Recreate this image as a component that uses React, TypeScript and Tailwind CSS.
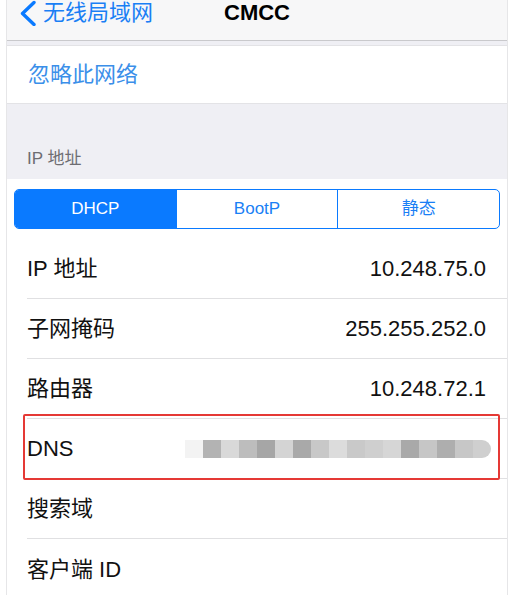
const FONT = '"Liberation Sans", "Noto Sans CJK SC", sans-serif';

const rows = [
  { label: 'IP 地址', value: '10.248.75.0' },
  { label: '子网掩码', value: '255.255.252.0' },
  { label: '路由器', value: '10.248.72.1' },
];

const blurShades = [
  '#b3b3b3', '#d9d9d9', '#bdbdbd', '#a6a6a6', '#d4d4d4', '#a9a9a9', '#c8c8c8', '#dcdcdc',
  '#c9c9c9', '#cfcfcf', '#d6d6d6', '#a9a9a9', '#c6c6c6', '#aeaeae', '#c7c7c7', '#cfcfcf',
];

function Row({ label, value, last }: { label: string; value?: string; last?: boolean }) {
  return (
    <div className="pl-[20px]">
      <div
        className={`h-[60px] flex items-center justify-between pr-[21px] ${
          last ? '' : 'border-b border-[#e0e0e2]'
        }`}
      >
        <span className="text-[22px] text-[#111]">{label}</span>
        {value && <span className="text-[22px] text-[#111]">{value}</span>}
      </div>
    </div>
  );
}

function BlurredValue() {
  return (
    <div className="relative h-[18px] flex items-center">
      <div className="w-[18px] h-[18px] bg-[#f3f3f3]" />
      {blurShades.map((c, i) => (
        <div
          key={i}
          className={`w-[18px] h-[18px] ${i === blurShades.length - 1 ? 'rounded-r-full' : ''}`}
          style={{ backgroundColor: c }}
        />
      ))}
    </div>
  );
}

export default function App() {
  return (
    <div className="w-full h-[595px] bg-white pl-[6px] pr-[1px] overflow-hidden" style={{ fontFamily: FONT }}>
      <div className="w-[502px] h-full border-x border-[#e6e6e8] bg-white flex flex-col">
        {/* nav bar */}
        <div className="h-[41px] bg-[#f7f7f8] border-b border-[#c9c9cc] relative shrink-0">
          <div className="absolute left-[10px] top-0 flex items-center h-[26px]">
            <svg width="22" height="26" viewBox="0 0 22 26" className="text-[#0a7aff]">
              <path d="M17 2.5 L5.5 13.5 L17 24.5" fill="none" stroke="currentColor" strokeWidth="3.4" strokeLinecap="round" strokeLinejoin="round" />
            </svg>
            <span className="ml-[4px] text-[22px] leading-[26px] text-[#1a7ff5]">无线局域网</span>
          </div>
          <div className="absolute left-0 right-0 top-0 h-[26px] flex justify-center items-center">
            <span className="text-[22px] font-bold leading-[26px] text-black">CMCC</span>
          </div>
        </div>

        <div className="bg-[#efeff4] h-[4px] shrink-0" />

        {/* forget network */}
        <div className="h-[59px] bg-white border-y border-[#e3e3e6] flex items-center pl-[21px] shrink-0">
          <span className="text-[22px] text-[#3b8fe9]">忽略此网络</span>
        </div>

        {/* section header */}
        <div className="h-[75px] bg-[#efeff4] flex items-end pl-[20px] pb-[8px] shrink-0">
          <span className="text-[17px] text-[#6d6d72]">IP 地址</span>
        </div>

        {/* content */}
        <div className="flex-1 bg-white">
          <div className="px-[7px] pt-[10px] pb-[10px]">
            <div className="h-[40px] flex border border-[#0a7aff] rounded-[5px] overflow-hidden">
              <div className="flex-1 bg-[#0a7aff] text-white text-[17px] flex items-center justify-center">
                DHCP
              </div>
              <div className="flex-1 border-l border-[#0a7aff] text-[#1a7ff5] text-[17px] flex items-center justify-center">
                BootP
              </div>
              <div className="flex-1 border-l border-[#0a7aff] text-[#1a7ff5] text-[17px] flex items-center justify-center">
                静态
              </div>
            </div>
          </div>

          {rows.map((r) => (
            <Row key={r.label} label={r.label} value={r.value} />
          ))}

          <div className="pl-[20px] relative">
            <div className="h-[60px] flex items-center justify-between pr-[16px] border-b border-[#e0e0e2]">
              <span className="text-[22px] text-[#111]">DNS</span>
              <BlurredValue />
            </div>
            <div className="absolute left-[16px] right-[7px] top-[-5px] bottom-[-1px] border-2 border-[#e53935] rounded-[2px]" />
          </div>

          <Row label="搜索域" />
          <Row label="客户端 ID" last />
        </div>
      </div>
    </div>
  );
}
